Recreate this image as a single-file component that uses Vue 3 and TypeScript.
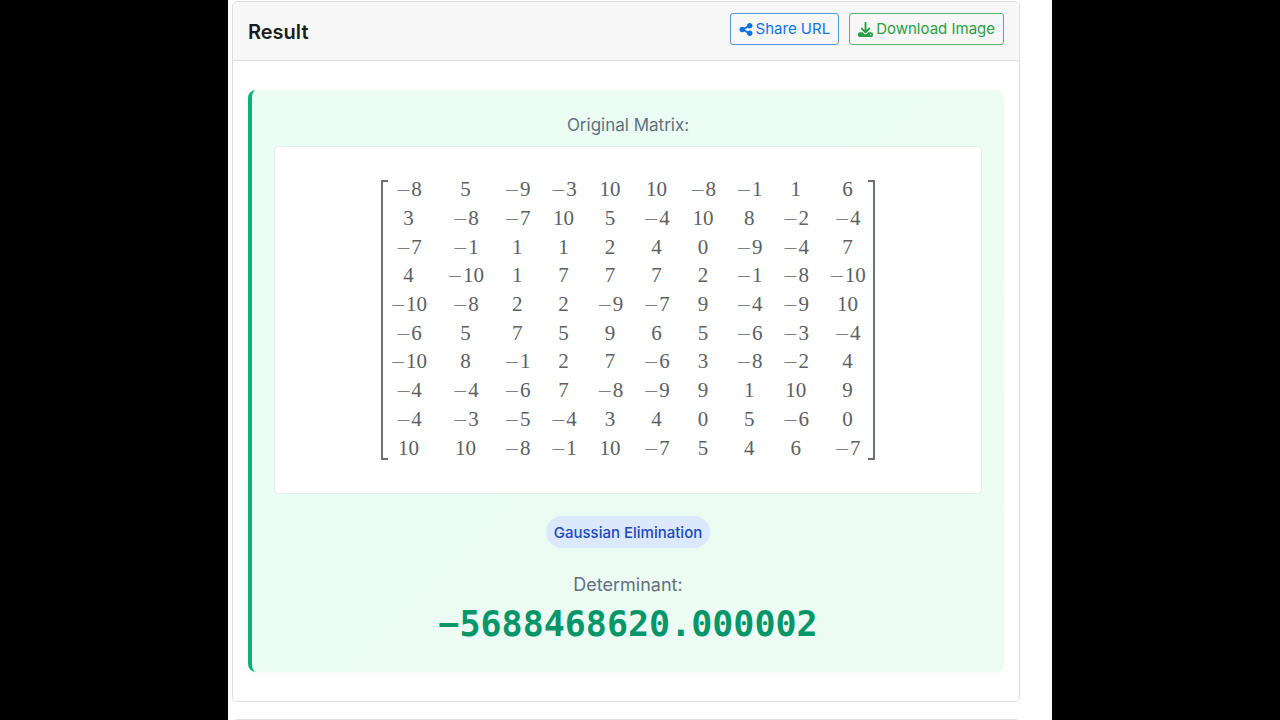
<script setup lang="ts">
const matrix: number[][] = [
  [-8, 5, -9, -3, 10, 10, -8, -1, 1, 6],
  [3, -8, -7, 10, 5, -4, 10, 8, -2, -4],
  [-7, -1, 1, 1, 2, 4, 0, -9, -4, 7],
  [4, -10, 1, 7, 7, 7, 2, -1, -8, -10],
  [-10, -8, 2, 2, -9, -7, 9, -4, -9, 10],
  [-6, 5, 7, 5, 9, 6, 5, -6, -3, -4],
  [-10, 8, -1, 2, 7, -6, 3, -8, -2, 4],
  [-4, -4, -6, 7, -8, -9, 9, 1, 10, 9],
  [-4, -3, -5, -4, 3, 4, 0, 5, -6, 0],
  [10, 10, -8, -1, 10, -7, 5, 4, 6, -7],
]
</script>

<template>
  <main class="page">
    <section class="card">
      <header class="card-header">
        <h1 class="title">Result</h1>
        <div class="actions">
          <button type="button" class="btn share">
            <svg class="icon share-icon" viewBox="0 0 448 512" aria-hidden="true">
              <path d="M352 224c53 0 96-43 96-96s-43-96-96-96-96 43-96 96c0 4 .2 8 .7 11.900l-94.100 47C145.400 170.200 121.900 160 96 160c-53 0-96 43-96 96s43 96 96 96c25.900 0 49.400-10.200 66.600-26.900l94.100 47c-.5 3.900-.7 7.800-.7 11.900 0 53 43 96 96 96s96-43 96-96-43-96-96-96c-25.900 0-49.400 10.200-66.600 26.900l-94.100-47c.5-3.900.7-7.800.7-11.900s-.2-8-.7-11.900l94.100-47C302.600 213.800 326.100 224 352 224z" />
            </svg>
            <span>Share URL</span>
          </button>
          <button type="button" class="btn download">
            <svg class="icon" viewBox="0 0 512 512" aria-hidden="true">
              <path d="M288 32c0-17.700-14.300-32-32-32s-32 14.300-32 32v242.700l-73.400-73.400c-12.500-12.500-32.800-12.500-45.300 0s-12.500 32.800 0 45.300l128 128c12.500 12.500 32.800 12.500 45.300 0l128-128c12.500-12.500 12.500-32.800 0-45.300s-32.800-12.500-45.300 0L288 274.700V32zM64 352c-35.300 0-64 28.700-64 64v32c0 35.300 28.700 64 64 64h384c35.300 0 64-28.700 64-64v-32c0-35.300-28.700-64-64-64H346.500l-45.300 45.300c-25 25-65.500 25-90.500 0L165.500 352H64zm368 56a24 24 0 1 1 0 48 24 24 0 1 1 0-48z" />
            </svg>
            <span>Download Image</span>
          </button>
        </div>
      </header>
      <div class="card-body">
        <div class="result">
          <p class="label caption">Original Matrix:</p>
          <div class="matrix-box">
            <div class="brackets">
              <table class="matrix" aria-label="Original matrix">
                <tbody>
                  <tr v-for="(row, r) in matrix" :key="r">
                    <td v-for="(value, c) in row" :key="c"><span v-if="value < 0" class="minus">−</span>{{ Math.abs(value) }}</td>
                  </tr>
                </tbody>
              </table>
            </div>
          </div>
          <span class="method">Gaussian Elimination</span>
          <p class="label">Determinant:</p>
          <output class="determinant">−5688468620.000002</output>
        </div>
      </div>
    </section>
    <section class="card next"></section>
  </main>
</template>

<style>
html,
body {
  background: #000;
}
body {
  overflow: hidden;
}
</style>

<style scoped>
.page {
  box-sizing: border-box;
  max-width: 824px;
  height: 100vh;
  margin: 0 auto;
  padding: 1px 32px 0 4px;
  overflow: hidden;
  background: #fff;
  font-family: Inter, "Liberation Sans", sans-serif;
  color: #1c1d21;
}
.card {
  border: 1px solid #dfdfdf;
  border-radius: 5px;
  background: #fff;
}
.card-header {
  display: flex;
  justify-content: space-between;
  align-items: flex-start;
  padding: 11px 15px 9px;
  background: #f7f7f7;
  border-bottom: 1px solid #dfdfdf;
  border-radius: 4px 4px 0 0;
}
.title {
  margin: 0;
  font-size: 20px;
  line-height: 38px;
  font-weight: 600;
}
.actions {
  display: flex;
  gap: 10px;
}
.btn {
  display: flex;
  align-items: center;
  gap: 3px;
  height: 32px;
  padding: 0 8px;
  border: 1px solid;
  border-radius: 3px;
  background: transparent;
  font-family: inherit;
  font-size: 15px;
  line-height: 20px;
}
.share {
  color: #0f73e6;
  border-color: #4f97d8;
}
.download {
  color: #2a9d45;
  border-color: #5bb270;
}
.icon {
  width: 15px;
  height: 15px;
  fill: currentColor;
}
.share-icon {
  width: 14px;
}
.card-body {
  padding: 29px 15px;
}
.result {
  display: flex;
  flex-direction: column;
  align-items: center;
  padding: 22px 22px 25px;
  border-left: 4px solid #10b07a;
  border-radius: 8px;
  background: linear-gradient(135deg, #eafcf4, #edfcf3);
  box-shadow: 0 2px 8px rgba(0, 0, 0, 0.03);
}
.label {
  margin: 0;
  font-size: 18px;
  line-height: 28px;
  color: #64707f;
}
.caption {
  font-size: 17px;
  line-height: 26px;
}
.matrix-box {
  box-sizing: border-box;
  display: flex;
  justify-content: center;
  width: 100%;
  margin: 8px 0 22px;
  padding: 28px 20px 31px;
  border: 1px solid #e3efe9;
  border-radius: 5px;
  background: #fff;
}
.brackets {
  position: relative;
  padding: 0 9px;
}
.brackets::before,
.brackets::after {
  content: "";
  position: absolute;
  top: 5px;
  bottom: 2px;
  width: 5px;
  border: 2px solid #6b7175;
}
.brackets::before {
  left: 0;
  border-right: 0;
}
.brackets::after {
  right: 0;
  border-left: 0;
}
.matrix {
  height: 287px;
  border-collapse: collapse;
  font-family: "Liberation Serif", serif;
  font-size: 21px;
  line-height: 24px;
  color: #5c6064;
}
.matrix td {
  padding: 0 10px;
  text-align: center;
  white-space: nowrap;
}
.matrix td:first-child {
  padding-left: 0;
}
.matrix td:last-child {
  padding-right: 0;
}
.minus {
  font-family: "DejaVu Sans Light", "DejaVu Sans", sans-serif;
  font-weight: 200;
  font-size: 19px;
  line-height: 20px;
}
.method {
  margin-bottom: 23px;
  padding: 7px 8px 5px;
  border-radius: 16px;
  background: #dbe8fd;
  color: #2148bd;
  font-size: 15px;
  line-height: 20px;
  font-weight: 500;
}
.determinant {
  margin-top: 2px;
  font-family: "DejaVu Sans Mono", monospace;
  font-size: 35px;
  line-height: 46px;
  font-weight: 700;
  color: #079669;
}
.next {
  height: 40px;
  margin-top: 17px;
}
</style>
